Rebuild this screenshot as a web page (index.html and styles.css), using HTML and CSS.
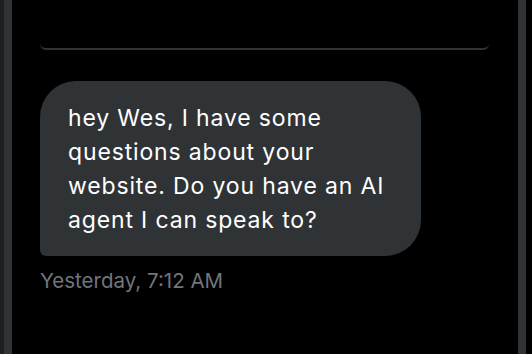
FILE: index.html
```html
<!DOCTYPE html>
<html lang="en">
<head>
  <meta charset="UTF-8">
  <meta name="viewport" content="width=device-width, initial-scale=1.0">
  <title>Messages</title>
  <link rel="stylesheet" href="styles.css">
</head>
<body>
  <div class="edge"></div>

  <!-- Conversation -->
  <main class="conversation">
    <div class="conversation-top"></div>

    <div class="message">
      <div class="bubble">
        hey Wes, I have some questions about your website. Do you have an AI agent I can speak to?
      </div>
      <div class="timestamp">Yesterday, 7:12 AM</div>
    </div>
  </main>

  <div class="gutter"></div>
</body>
</html>
```
FILE: styles.css
```css
/* General Reset */
* {
  margin: 0;
  padding: 0;
  box-sizing: border-box;
}

body {
  font-family: Inter, "Noto Sans", Arial, sans-serif;
  background-color: #000;
  color: #e7e9ea;
  display: flex;
  height: 100vh;
  overflow: hidden;
}

/* Side edges */
.edge {
  width: 4px;
  background-color: #1d1f23;
}

.gutter {
  width: 6px;
  background-color: #000;
}

/* Conversation */
.conversation {
  flex: 1;
  border-left: 8px solid #2f3336;
  border-right: 8px solid #2f3336;
}

.conversation-top {
  height: 50px;
  margin: 0 29px 0 28px;
  border-bottom: 2px solid #2f3336;
  border-radius: 0 0 6px 6px;
}

/* Message */
.message {
  margin: 31px 0 0 28px;
}

.bubble {
  width: 381px;
  padding: 20px 28px 19px 28px;
  background-color: #2f3336;
  border-radius: 36px 36px 36px 6px;
  color: #fff;
  font-size: 23px;
  letter-spacing: 0.85px;
  line-height: 34px;
}

.timestamp {
  margin-top: 13px;
  color: #71767b;
  font-size: 20.5px;
  line-height: 24px;
}
```
